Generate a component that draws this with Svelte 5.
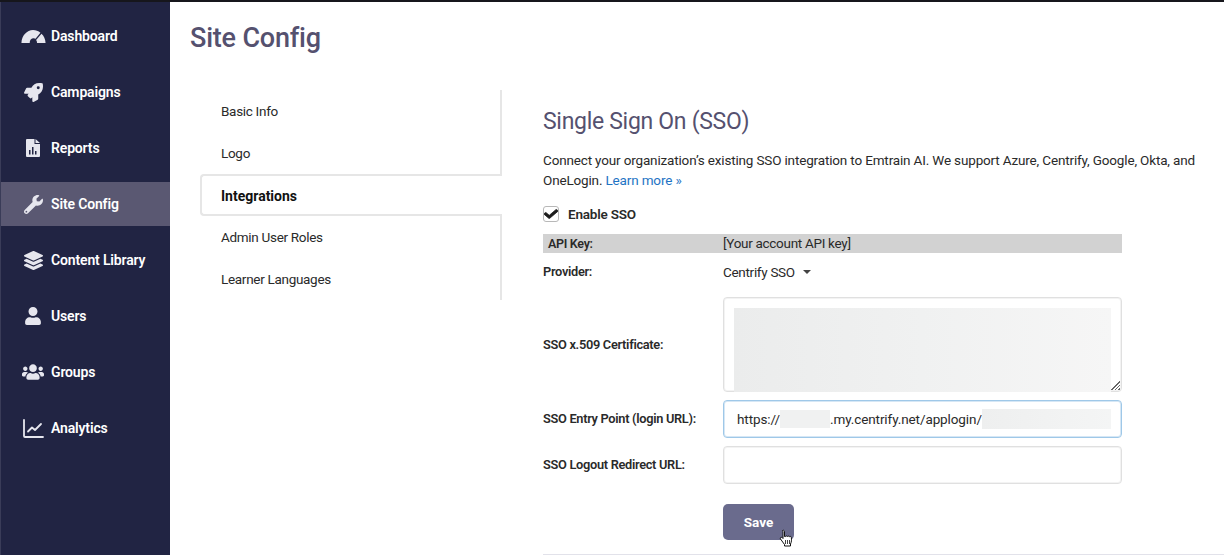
<script>
  const nav = [
    { label: 'Dashboard', icon: 'gauge' },
    { label: 'Campaigns', icon: 'rocket' },
    { label: 'Reports', icon: 'report' },
    { label: 'Site Config', icon: 'wrench', active: true },
    { label: 'Content Library', icon: 'layers' },
    { label: 'Users', icon: 'user' },
    { label: 'Groups', icon: 'users' },
    { label: 'Analytics', icon: 'chart' }
  ];
  const tabs = [
    { label: 'Basic Info' },
    { label: 'Logo' },
    { label: 'Integrations', active: true },
    { label: 'Admin User Roles' },
    { label: 'Learner Languages' }
  ];
</script>

<div class="page">
  <aside class="sidebar">
    {#each nav as item}
      <a class="nav-item" class:active={item.active} href="#top">
        <span class="nav-icon">
          {#if item.icon === 'gauge'}
            <svg width="25" height="13" viewBox="0 0 26 14"><path fill="currentColor" fill-rule="evenodd" d="M0 14C.3 6 6 0 12.5 0c3 0 5.700 1 8 3l-5.300 6.500c-.5-.3-1.200-.5-2-.5-2.600 0-4.400 2.100-4.300 5H0zM21.600 4C24.200 6.400 25.800 10 26 14H16.800c0-1.400-.3-2.500-1-3.300L21.600 4z"/></svg>
          {:else if item.icon === 'rocket'}
            <svg width="19" height="19" viewBox="0 0 512 512"><path fill="currentColor" d="M505.12019,19.09375c-1.18945-5.53125-6.65819-11-12.207-12.1875C460.716,0,435.507,0,410.40747,0,307.17523,0,245.26909,55.20312,199.05238,128H94.83772c-16.34763.01562-35.55658,11.875-42.88664,26.48438L2.51562,253.29688A28.4,28.4,0,0,0,0,264a24.00867,24.00867,0,0,0,24.00582,24H127.81618l-22.47457,22.46875c-11.36521,11.36133-12.99607,32.25781,0,45.25L156.24582,406.625c11.15623,11.1875,32.15619,13.15625,45.27726,0l22.47457-22.46875V488a24.00867,24.00867,0,0,0,24.00581,24,28.55934,28.55934,0,0,0,10.707-2.51562l98.72834-49.39063c14.62888-7.29687,26.50776-26.5,26.50776-42.85937V312.79688c72.59753-46.3125,128.03493-108.40626,128.03493-211.09376C512.07526,76.5,512.07526,51.29688,505.12019,19.09375ZM384.04033,168A40,40,0,1,1,424.05,128,40.02322,40.02322,0,0,1,384.04033,168Z"/></svg>
          {:else if item.icon === 'report'}
            <svg width="14" height="18" viewBox="0 0 14 18"><path fill="currentColor" fill-rule="evenodd" d="M1 0h7.500v5H14v12a1 1 0 0 1-1 1H1a1 1 0 0 1-1-1V1a1 1 0 0 1 1-1zM9.500 0 14 4H9.500V0zM3 11v4.500h1.500V11H3zm3-3v7.500h1.500V8H6zm3 4v3.500h1.500V12H9z"/></svg>
          {:else if item.icon === 'wrench'}
            <svg width="19" height="19" viewBox="0 0 512 512"><path fill="currentColor" d="M507.73 109.1c-2.24-9.03-13.54-12.09-20.12-5.51l-74.36 74.36-67.88-11.31-11.31-67.88 74.36-74.36c6.62-6.62 3.43-17.9-5.66-20.16-47.38-11.74-99.55.91-136.58 37.93-39.64 39.64-50.55 97.1-34.05 147.2L18.74 402.76c-24.99 24.99-24.99 65.51 0 90.5 24.99 24.99 65.51 24.99 90.5 0l213.21-213.21c50.12 16.71 107.47 5.68 147.37-34.22 37.07-37.07 49.7-89.32 37.91-136.73zM64 472c-13.25 0-24-10.75-24-24 0-13.26 10.75-24 24-24s24 10.74 24 24c0 13.25-10.75 24-24 24z"/></svg>
          {:else if item.icon === 'layers'}
            <svg width="19" height="19" viewBox="0 0 512 512"><path fill="currentColor" d="M12.41 148.02l232.94 105.67c6.8 3.09 14.49 3.09 21.29 0l232.94-105.67c16.55-7.51 16.55-32.52 0-40.03L266.65 2.31a25.607 25.607 0 0 0-21.29 0L12.41 107.98c-16.55 7.51-16.55 32.53 0 40.04zm487.18 88.28l-58.09-26.33-161.64 73.27c-7.56 3.43-15.59 5.17-23.86 5.17s-16.29-1.74-23.86-5.17L70.51 209.97l-58.1 26.33c-16.55 7.5-16.55 32.5 0 40l232.94 105.59c6.8 3.08 14.49 3.08 21.29 0L499.59 276.3c16.55-7.5 16.55-32.5 0-40zm0 127.8l-57.87-26.23-161.86 73.37c-7.56 3.43-15.59 5.17-23.86 5.17s-16.29-1.74-23.86-5.17L70.29 337.87 12.41 364.1c-16.55 7.5-16.55 32.5 0 40l232.94 105.59c6.8 3.08 14.49 3.08 21.29 0L499.59 404.1c16.55-7.5 16.55-32.5 0-40z"/></svg>
          {:else if item.icon === 'user'}
            <svg width="16" height="18" viewBox="0 0 448 512"><path fill="currentColor" d="M224 256c70.7 0 128-57.3 128-128S294.7 0 224 0 96 57.3 96 128s57.3 128 128 128zm89.6 32h-16.7c-22.2 10.2-46.9 16-72.9 16s-50.6-5.8-72.9-16h-16.7C60.2 288 0 348.2 0 422.4V464c0 26.500 21.500 48 48 48h352c26.500 0 48-21.500 48-48v-41.600c0-74.200-60.200-134.400-134.400-134.400z"/></svg>
          {:else if item.icon === 'users'}
            <svg width="22" height="18" viewBox="0 0 640 512"><path fill="currentColor" d="M96 224c35.300 0 64-28.700 64-64s-28.700-64-64-64-64 28.700-64 64 28.700 64 64 64zm448 0c35.300 0 64-28.700 64-64s-28.700-64-64-64-64 28.700-64 64 28.700 64 64 64zm32 32h-64c-17.600 0-33.500 7.100-45.100 18.600 40.300 22.100 68.900 62 75.100 109.400h66c17.700 0 32-14.300 32-32v-32c0-35.300-28.700-64-64-64zm-256 0c61.900 0 112-50.100 112-112S381.900 32 320 32 208 82.100 208 144s50.100 112 112 112zm76.800 32h-8.300c-20.800 10-43.900 16-68.500 16s-47.600-6-68.500-16h-8.300C179.600 288 128 339.600 128 403.200V432c0 26.500 21.500 48 48 48h288c26.500 0 48-21.500 48-48v-28.800c0-63.600-51.600-115.200-115.200-115.200zm-223.700-13.400C161.500 263.100 145.600 256 128 256H64c-35.300 0-64 28.700-64 64v32c0 17.700 14.300 32 32 32h65.900c6.300-47.400 34.900-87.300 75.200-109.400z"/></svg>
          {:else}
            <svg width="21" height="19" viewBox="0 0 21 19"><path fill="none" stroke="currentColor" stroke-width="1.800" stroke-linecap="round" stroke-linejoin="round" d="M1 1v16a1 1 0 0 0 1 1h18M5 12.500 9 8.500l3 2.500L18 5"/></svg>
          {/if}
        </span>
        <span>{item.label}</span>
      </a>
    {/each}
  </aside>

  <main class="main">
    <h1>Site Config</h1>
    <div class="columns">
      <nav class="tabs">
        {#each tabs as tab}
          <div class="tab" class:selected={tab.active}>{tab.label}</div>
        {/each}
      </nav>

      <section class="panel">
        <h2>Single Sign On (SSO)</h2>
        <p class="intro">Connect your organization’s existing SSO integration to Emtrain AI. We support Azure, Centrify, Google, Okta, and OneLogin. <a href="#top">Learn more »</a></p>

        <div class="enable">
          <span class="checkbox">
            <svg width="14" height="12" viewBox="0 0 512 512" preserveAspectRatio="none"><path fill="#1c1c1c" stroke="#1c1c1c" stroke-width="30" d="M173.898 439.404l-166.4-166.4c-9.997-9.997-9.997-26.206 0-36.204l36.203-36.204c9.997-9.998 26.207-9.998 36.204 0L192 312.69 432.095 72.596c9.997-9.997 26.207-9.997 36.204 0l36.203 36.204c9.997 9.997 9.997 26.206 0 36.204l-294.4 294.401c-9.998 9.997-26.207 9.997-36.204-.001z"/></svg>
          </span>
          <span>Enable SSO</span>
        </div>

        <div class="api-row">
          <span class="api-label">API Key:</span>
          <span>[Your account API key]</span>
        </div>

        <div class="form">
          <div class="label provider-label">Provider:</div>
          <div class="provider">Centrify SSO <span class="caret"></span></div>

          <div class="label">SSO x.509 Certificate:</div>
          <div class="textarea">
            <div class="redacted-block"></div>
            <span class="grip"></span>
          </div>

          <div class="label">SSO Entry Point (login URL):</div>
          <div class="input focus">
            <span>https://</span><span class="blur short"></span><span>.my.centrify.net/applogin/</span><span class="blur long"></span>
          </div>

          <div class="label">SSO Logout Redirect URL:</div>
          <div class="input"></div>

          <div></div>
          <div class="save-wrap">
            <button class="save" type="button">Save</button>
            <svg class="pointer" width="15" height="19" viewBox="0 0 15 19"><path fill="#fff" stroke="#111" stroke-width="1" stroke-linejoin="round" d="M3.500 1.500c.9-.6 2 0 2 1v5l1 .1c0-.9 1.900-.9 2 0 .2-.8 1.900-.7 2 .2.400-.7 1.800-.4 1.800.6.400 2.300.2 4.700-.8 6.600v2H5.500v-1.500L1.500 10c-.8-1.100.5-2.300 1.700-1.300l.8.800V2.500c0-.4 0-.8-.5-1z"/><path stroke="#111" stroke-width=".8" d="M6.500 11v4M8.500 11v4M10.500 11v4"/></svg>
          </div>
        </div>

        <div class="rule"></div>
      </section>
    </div>
  </main>
</div>

<style>
  :global(body) {
    margin: 0;
    background: #fff;
  }
  .page {
    display: flex;
    width: 1224px;
    height: 555px;
    overflow: hidden;
    box-sizing: border-box;
    border-top: 2px solid #16161c;
    font-family: Roboto, sans-serif;
    font-size: 13.5px;
    letter-spacing: -0.3px;
    color: #2a2a2a;
  }
  .sidebar {
    width: 170px;
    flex: none;
    background: #212443;
    padding-top: 12px;
    box-sizing: border-box;
    border-left: 1px solid #3a3c58;
  }
  .nav-item {
    display: flex;
    align-items: center;
    height: 44px;
    margin-bottom: 12px;
    color: #fff;
    font-size: 14px;
    font-weight: 600;
    letter-spacing: -0.15px;
    text-decoration: none;
  }
  .nav-item.active {
    background: #5a5872;
  }
  .nav-icon {
    width: 50px;
    padding-left: 14px;
    box-sizing: border-box;
    flex: none;
    display: flex;
    justify-content: center;
    color: #e6e6ee;
  }
  .main {
    flex: 1;
    min-width: 0;
  }
  h1 {
    margin: 16px 0 0 20px;
    font-size: 27px;
    line-height: 40px;
    font-weight: 500;
    letter-spacing: -0.2px;
    color: #55516f;
  }
  .columns {
    display: flex;
    margin-top: 32px;
    padding-left: 30px;
  }
  .tabs {
    width: 302px;
    height: 210px;
    flex: none;
    box-sizing: border-box;
    border-right: 2px solid #e6e6e6;
    display: flex;
    flex-direction: column;
  }
  .tab {
    height: 42px;
    display: flex;
    align-items: center;
    padding-left: 21px;
    box-sizing: border-box;
  }
  .tab.selected {
    font-size: 14px;
    font-weight: 700;
    letter-spacing: 0;
    color: #111;
    background: #fff;
    margin-right: -2px;
    border: 2px solid #e6e6e6;
    border-right: 0;
    border-radius: 4px 0 0 4px;
    padding: 2px 0 0 19px;
  }
  .panel {
    margin-left: 41px;
    flex: 1;
    min-width: 0;
  }
  h2 {
    margin: 14px 0 0;
    font-size: 23px;
    line-height: 36px;
    font-weight: 400;
    letter-spacing: -0.3px;
    color: #55516f;
  }
  .intro {
    margin: 9.6px 0 0;
    width: 660px;
    line-height: 20px;
    letter-spacing: -0.16px;
  }
  .intro a {
    color: #1f74c4;
    text-decoration: none;
  }
  .enable {
    display: flex;
    align-items: center;
    gap: 9px;
    margin-top: 14.4px;
    height: 20px;
    font-weight: 600;
    letter-spacing: -0.2px;
  }
  .checkbox {
    width: 16px;
    height: 16px;
    box-sizing: border-box;
    border: 1px solid #b8b8b8;
    border-radius: 3px;
    display: flex;
    align-items: center;
    justify-content: center;
  }
  .api-row {
    display: flex;
    align-items: center;
    width: 579px;
    height: 19px;
    margin-top: 10px;
    background: #d2d2d2;
    box-sizing: border-box;
    padding-left: 5px;
  }
  .api-label {
    width: 175px;
    font-size: 12.5px;
    font-weight: 600;
  }
  .form {
    display: grid;
    grid-template-columns: 180px 399px;
    row-gap: 8px;
    align-items: center;
    margin-top: 6px;
  }
  .label {
    font-weight: 600;
    font-size: 12.8px;
  }
  .provider-label {
    padding-bottom: 4px;
  }
  .provider {
    height: 30px;
    box-sizing: border-box;
    padding-bottom: 4px;
    display: flex;
    align-items: center;
    gap: 8px;
  }
  .caret {
    border: 4px solid transparent;
    border-top-color: #444;
    border-bottom: 0;
  }
  .textarea {
    position: relative;
    height: 95px;
    box-sizing: border-box;
    border: 1px solid #e0e0e0;
    box-shadow: inset 0 0 0 1px #f3f3f3;
    border-radius: 4px;
    padding: 10px 10px 0;
  }
  .redacted-block {
    height: 84px;
    background: linear-gradient(90deg, #ebecec, #f0f1f1 50%, #f6f6f6);
  }
  .grip {
    position: absolute;
    right: 1px;
    bottom: 1px;
    width: 11px;
    height: 11px;
    background: repeating-linear-gradient(135deg, transparent 0 1.5px, #666 1.5px 2.5px);
    clip-path: polygon(100% 0, 100% 100%, 0 100%);
  }
  .input {
    height: 38px;
    box-sizing: border-box;
    border: 1px solid #e0e0e0;
    box-shadow: inset 0 0 0 1px #f3f3f3;
    border-radius: 4px;
    display: flex;
    align-items: center;
    padding-left: 13px;
    white-space: nowrap;
    letter-spacing: -0.1px;
  }
  .input.focus {
    border-color: #9fc8e8;
    box-shadow: inset 0 0 0 1px #d6e7f5;
  }
  .blur {
    display: block;
    height: 18px;
  }
  .blur.short {
    width: 50px;
    background: #f0f1f1;
  }
  .blur.long {
    flex: none;
    width: 129px;
    height: 20px;
    background: linear-gradient(90deg, #eeefef, #f4f5f5);
  }
  .save-wrap {
    position: relative;
    margin-top: 12px;
  }
  .save {
    display: block;
    width: 71px;
    height: 36px;
    border: 0;
    border-radius: 5px;
    background: #6a6b8d;
    color: #fff;
    font-family: inherit;
    font-size: 13.5px;
    font-weight: 700;
    padding: 0;
  }
  .pointer {
    position: absolute;
    left: 56px;
    top: 25px;
  }
  .rule {
    margin-top: 14px;
    height: 1px;
    background: #e2e2ea;
  }
</style>
